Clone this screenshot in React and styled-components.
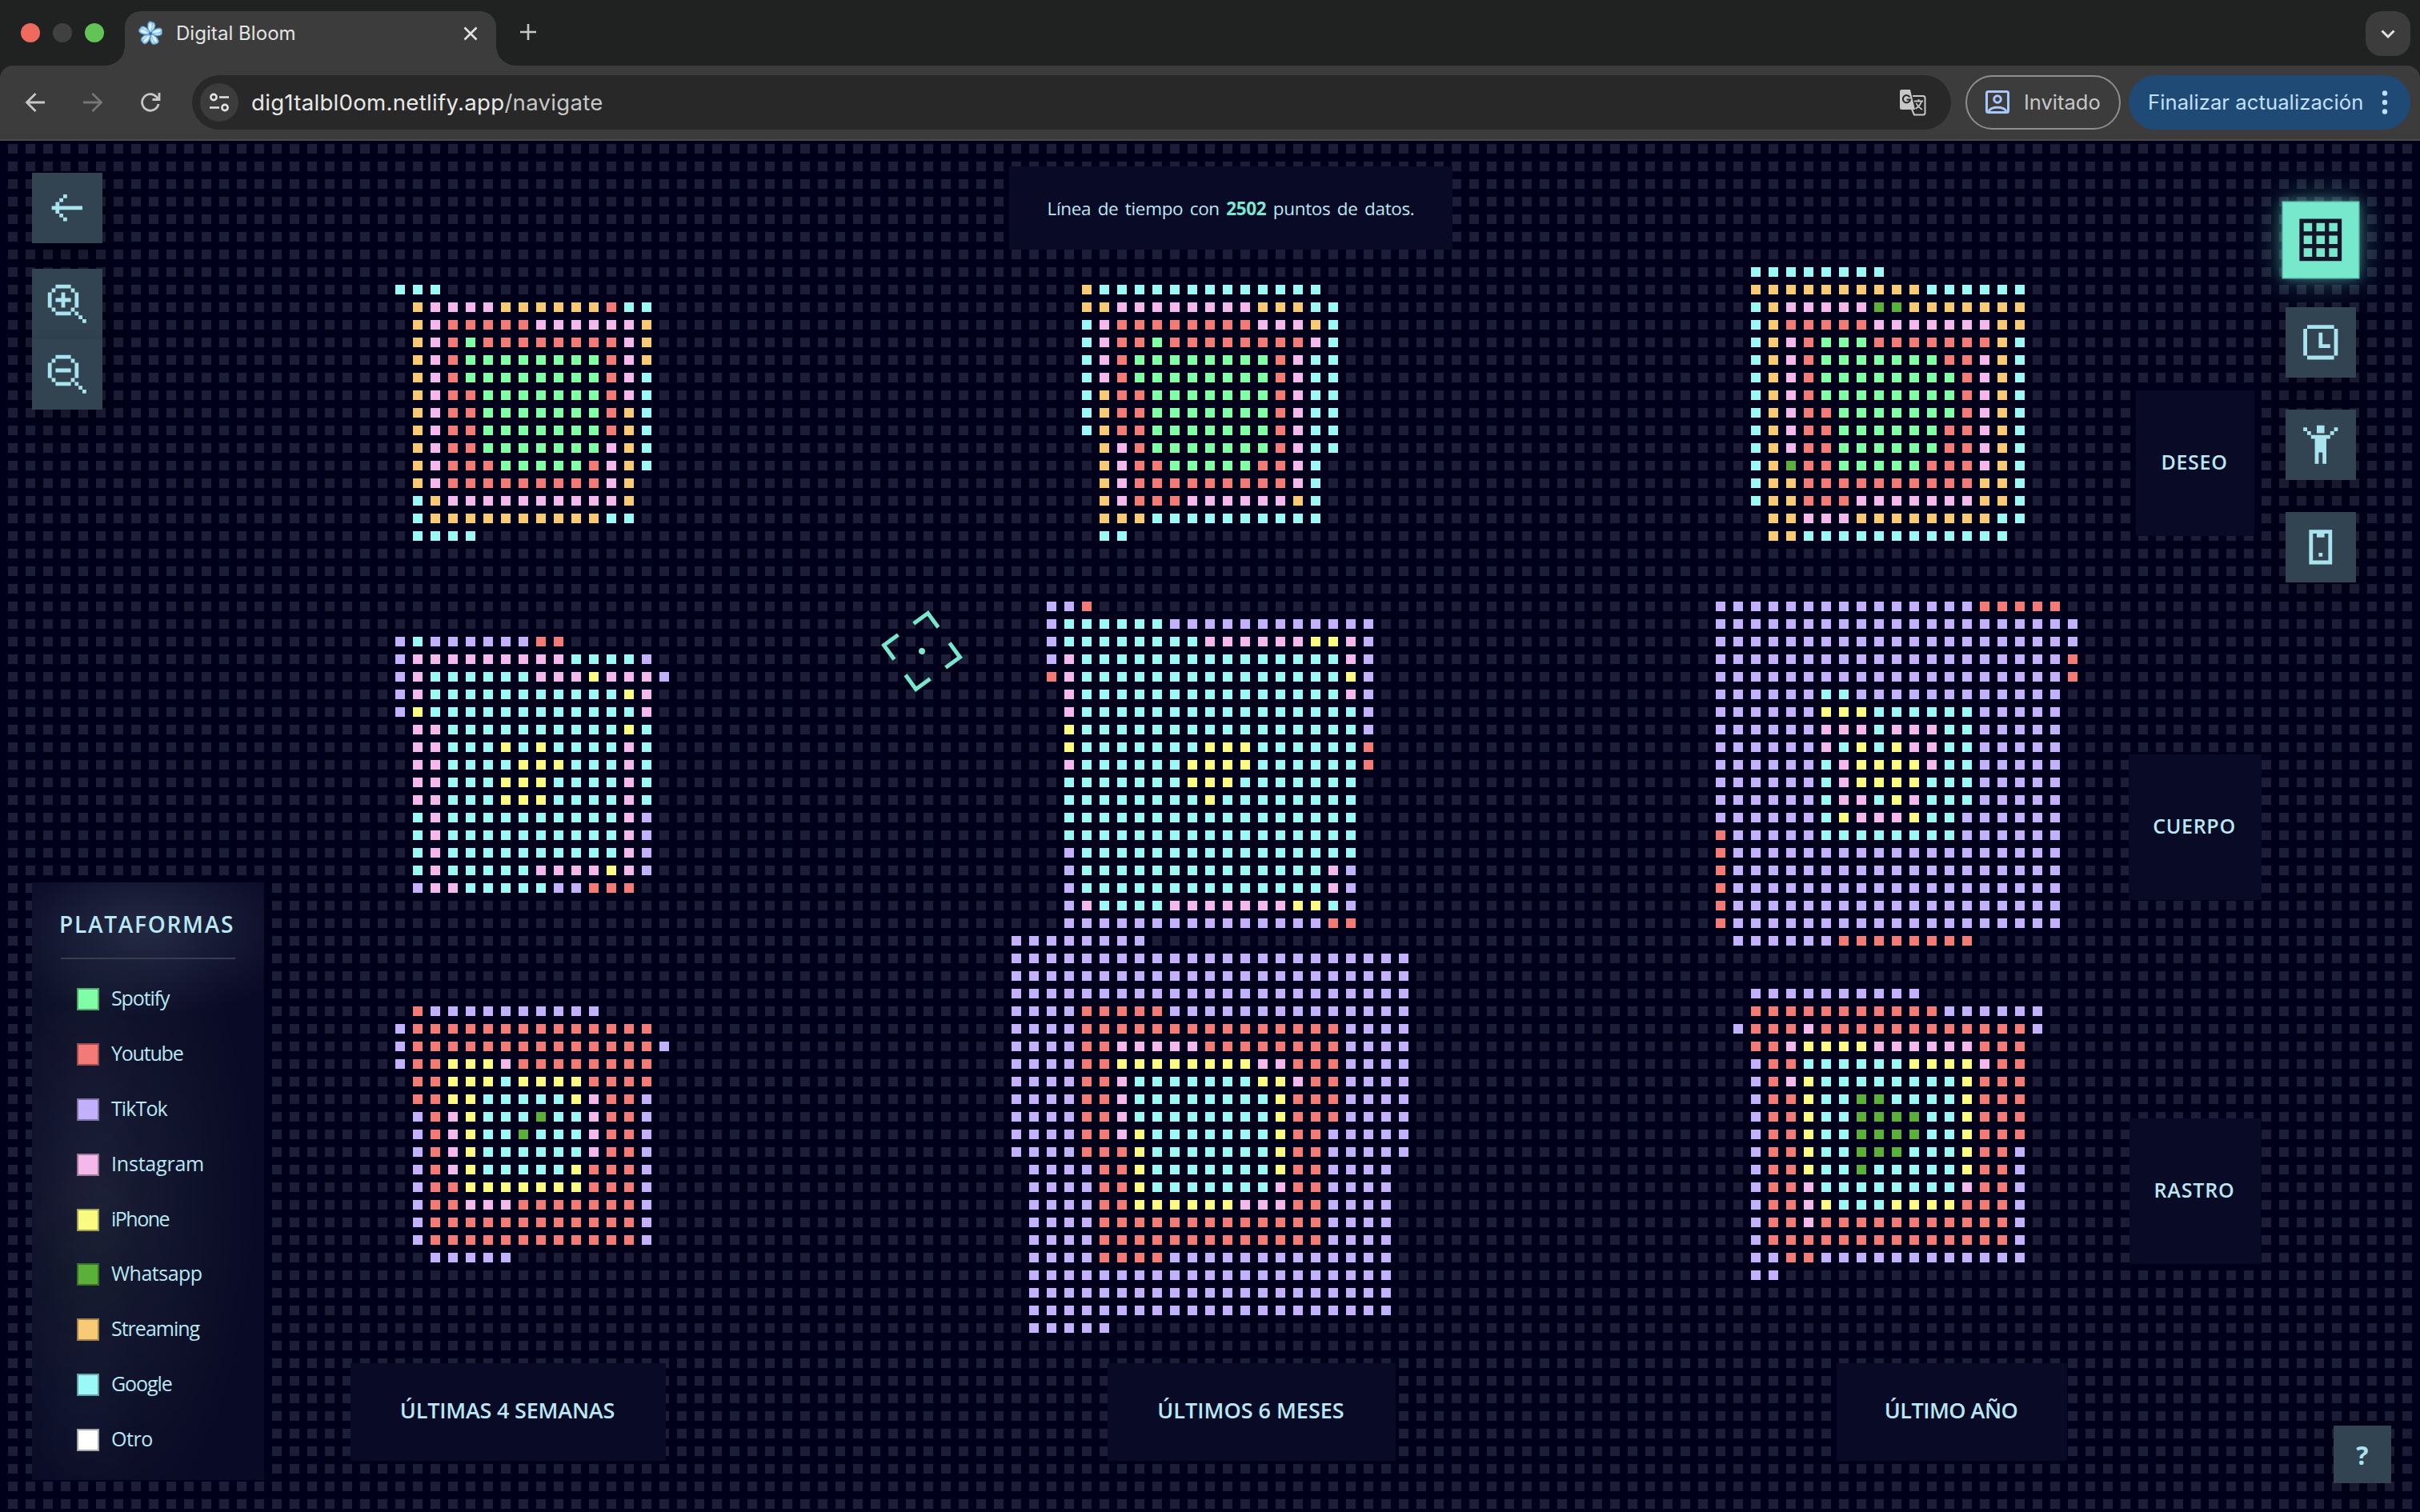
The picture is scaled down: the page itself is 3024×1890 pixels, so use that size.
import React from 'react';
import styled, { createGlobalStyle } from 'styled-components';

const CHROME_FONT = `Inter, 'Liberation Sans', sans-serif`;
const PIXEL_FONT = `'Open Sans', 'Liberation Sans', sans-serif`;

const GlobalStyle = createGlobalStyle`
  * { box-sizing: border-box; }
  body { margin: 0; background: #00001a; overflow: hidden; }
`;

const Window = styled.div`
  display: flex;
  flex-direction: column;
  width: 3024px;
  height: 1890px;
  overflow: hidden;
  background: #202221;
  font-family: ${CHROME_FONT};
`;

/* ---------- browser chrome ---------- */

const TabStrip = styled.div`
  display: flex;
  align-items: flex-end;
  height: 82px;
  padding: 0 12px 0 26px;
`;

const Lights = styled.div`
  display: flex;
  gap: 16px;
  margin-bottom: 29px;
`;

const Light = styled.span`
  width: 24px;
  height: 24px;
  border-radius: 50%;
  background: ${(p) => p.$color};
`;

const Tab = styled.div`
  position: relative;
  display: flex;
  align-items: center;
  width: 464px;
  height: 68px;
  margin-left: 26px;
  padding: 0 20px 12px 16px;
  border-radius: 20px 20px 0 0;
  background: #3c3c3c;
  &::before,
  &::after {
    content: '';
    position: absolute;
    bottom: 0;
    width: 24px;
    height: 24px;
  }
  &::before {
    left: -24px;
    background: radial-gradient(circle at 0 0, transparent 23.5px, #3c3c3c 24px);
  }
  &::after {
    right: -24px;
    background: radial-gradient(circle at 100% 0, transparent 23.5px, #3c3c3c 24px);
  }
`;

const TabTitle = styled.span`
  flex: 1;
  margin-left: 16px;
  color: #e3e3e3;
  font-size: 24px;
  line-height: 30px;
  letter-spacing: 0.05px;
`;

const NewTab = styled.div`
  display: flex;
  margin: 0 0 31px 29px;
`;

const TabSearch = styled.div`
  display: flex;
  align-items: center;
  justify-content: center;
  width: 56px;
  height: 56px;
  margin: 0 0 12px auto;
  border-radius: 20px;
  background: #3c3c3c;
`;

const Toolbar = styled.div`
  display: flex;
  align-items: center;
  height: 94px;
  padding: 0 12px 0 28px;
  border-bottom: 2px solid #4a4a4a;
  border-radius: 16px 16px 0 0;
  background: #3c3c3c;
`;

const NavIcons = styled.div`
  display: flex;
  gap: 40px;
  width: 212px;
`;

const UrlBar = styled.div`
  display: flex;
  align-items: center;
  width: 2198px;
  height: 68px;
  padding: 0 30px 0 10px;
  border-radius: 34px;
  background: #282828;
`;

const SiteInfo = styled.span`
  display: flex;
  align-items: center;
  justify-content: center;
  width: 48px;
  height: 48px;
  border-radius: 50%;
  background: #3c3c3c;
`;

const Url = styled.span`
  flex: 1;
  margin-left: 16px;
  color: #e8e8e8;
  font-size: 27.6px;
  line-height: 34px;
  letter-spacing: 0.28px;
`;

const UrlPath = styled.span`
  color: #c7c7c7;
`;

const GuestPill = styled.div`
  display: flex;
  align-items: center;
  width: 194px;
  height: 68px;
  margin-left: 18px;
  padding-left: 22px;
  gap: 17px;
  border: 2px solid #8e8e8e;
  border-radius: 34px;
  color: #c7c7c7;
  font-size: 25.5px;
  line-height: 34px;
  white-space: nowrap;
`;

const UpdatePill = styled.div`
  display: flex;
  align-items: center;
  justify-content: space-between;
  width: 352px;
  height: 68px;
  margin-left: 10px;
  padding: 0 28px 0 24px;
  border-radius: 34px;
  background: #1f4a76;
  color: #c2e0ff;
  font-size: 25.6px;
  line-height: 34px;
  letter-spacing: 0.08px;
  white-space: nowrap;
`;

/* ---------- page ---------- */

const Stage = styled.main`
  display: grid;
  grid-template: 1714px / 3024px;
  font-family: ${PIXEL_FONT};
  background-color: #00001a;
  color: #b9e8f5;
`;

const DotField = styled.svg`
  grid-area: 1 / 1;
  display: block;
  width: 3024px;
  height: 1714px;
`;

const Layer = styled.div`
  grid-area: 1 / 1;
  display: flex;
  min-width: 0;
  min-height: 0;
  pointer-events: none;
`;

const LeftRail = styled(Layer)`
  flex-direction: column;
  align-items: flex-start;
  justify-content: space-between;
  padding: 40px;
`;

const ButtonStack = styled.div`
  display: flex;
  flex-direction: column;
  gap: ${(p) => p.$gap}px;
`;

const IconButton = styled.div`
  display: flex;
  align-items: center;
  justify-content: center;
  width: 88px;
  height: 88px;
  background: ${(p) => (p.$active ? '#78e8cc' : '#324452')};
  color: ${(p) => (p.$active ? '#14142b' : '#a9e4ee')};
  box-shadow: ${(p) =>
    p.$active
      ? '0 0 40px rgba(120, 232, 204, 0.36), 0 0 12px rgba(120, 232, 204, 0.4), inset 0 0 0 1px rgba(60, 160, 150, 0.7)'
      : '0 8px 32px rgba(0, 0, 0, 0.3)'};
  transform: ${(p) => (p.$active ? 'scale(1.1)' : 'none')};
`;

const Panel = styled.div`
  background: #090a25;
`;

const Legend = styled(Panel)`
  width: 290px;
  height: 747px;
  padding: 30px 36px 0;
  overflow: hidden;
  background: radial-gradient(ellipse 200px 110px at 145px 58px, rgba(110, 125, 150, 0.26), transparent),
    radial-gradient(ellipse 190px 420px at 90px 400px, rgba(70, 85, 95, 0.26), transparent), #090a25;
`;

const LegendTitle = styled.h2`
  margin: 0;
  height: 66px;
  padding-top: 4px;
  border-bottom: 2px solid #373b4f;
  font-size: 28px;
  font-weight: 600;
  line-height: 36px;
  letter-spacing: 1.75px;
  text-indent: -2px;
  white-space: nowrap;
`;

const LegendList = styled.ul`
  display: flex;
  flex-direction: column;
  gap: 40.9px;
  margin: 0;
  padding: 36px 0 0 20px;
  list-style: none;
`;

const LegendItem = styled.li`
  display: flex;
  align-items: center;
  gap: 15px;
  height: 28px;
  font-size: 25px;
  line-height: 24px;
  letter-spacing: ${(p) => p.$track}px;
  white-space: nowrap;
`;

const LegendName = styled.span`
  padding-bottom: 4px;
`;

const Swatch = styled.span`
  width: 28px;
  height: 28px;
  border: 2px solid rgba(0, 0, 0, 0.35);
  background: ${(p) => p.$color};
  box-shadow: 0 0 80px -4px ${(p) => p.$color}70;
`;

const TopLayer = styled(Layer)`
  align-items: flex-start;
  padding: 32px 0 0 1261px;
`;

const InfoPanel = styled(Panel)`
  display: flex;
  align-items: center;
  justify-content: center;
  width: 554px;
  height: 104px;
  font-size: 22.5px;
  letter-spacing: -0.35px;
  word-spacing: 3px;
  white-space: pre;
`;

const Count = styled.b`
  color: #7be8cf;
  font-weight: 700;
`;

const RightRail = styled(Layer)`
  flex-direction: column;
  justify-content: space-between;
  align-items: flex-end;
  padding: 80px 36px 36px;
`;

const ViewButtons = styled(ButtonStack)`
  margin-right: 44px;
`;

const HelpButton = styled(IconButton)`
  width: 72px;
  height: 72px;
  font-size: 32px;
  font-weight: 700;
`;

const CategoryAxis = styled(Layer)`
  flex-direction: column;
  align-items: center;
  justify-self: end;
  width: 562px;
  padding-top: 312px;
  gap: 273px;
`;

const PeriodAxis = styled(Layer)`
  align-items: flex-end;
  padding: 0 0 64px 438px;
`;

const AxisLabel = styled(Panel)`
  display: flex;
  align-items: center;
  justify-content: center;
  flex: none;
  width: ${(p) => p.$w}px;
  height: ${(p) => p.$h}px;
  margin-left: ${(p) => p.$offset || 0}px;
  padding: 0 2px 5px 0;
  font-size: ${(p) => p.$size || 27}px;
  font-weight: 600;
  letter-spacing: ${(p) => p.$track || 0}px;
  white-space: nowrap;
`;

/* ---------- data ---------- */

const PLATFORMS = [
  { id: 'g', name: 'Spotify', color: '#80ffa6', track: -1.1 },
  { id: 'r', name: 'Youtube', color: '#f27b77', track: -1.2 },
  { id: 't', name: 'TikTok', color: '#c3b1fc', track: -0.9 },
  { id: 'i', name: 'Instagram', color: '#f5b8ec', track: -0.2 },
  { id: 'y', name: 'iPhone', color: '#fbfb84', track: -1.5 },
  { id: 'w', name: 'Whatsapp', color: '#5bb03b', track: -0.5 },
  { id: 's', name: 'Streaming', color: '#f8ca76', track: -1 },
  { id: 'c', name: 'Google', color: '#9cf7f7', track: -1.1 },
  { id: 'o', name: 'Otro', color: '#ffffff', track: -0.4 },
];
const COLOR = Object.fromEntries(PLATFORMS.map((p) => [p.id, p.color]));

/* Each row is a run-length string: a platform id and how many squares follow. */
const CLUSTERS = [
  {
    col: 22, row: 8,
    rows: ['c3', '.si4s6rc2', '.sir5i6s', '.sirgr8is', '.sirg8ris', '.sirg8ric', '.sir2g7ric', '.sir2g7rsc',
      '.sir2g7rsc', '.sir2g7isc', '.sir3g5risc', '.sir9is', '.csi10s', '.cs10c2', '.c4'],
  },
  {
    col: 61, row: 8,
    rows: ['sc13', 's2i8s3c2', 'cir8i3sc', 'cir2gr8ic', 'cirg8ric2', 'cirg8ric2', 'csr2g7ric2', 'csr2g7ric2',
      'csr2g7ric2', '.sirg7ric2', '.sir2g5r2ic', '.sir9ic', '.sir3i6sc', '.s3c10', '.c2'],
  },
  {
    col: 99, row: 7,
    rows: ['c8', 's10c6', 'csi5w2s7', 'csr5i7s2', 'csirg3r7sc', 'csirg7r2isc', 'csirg8risc', 'csirg8risc',
      'csir2g7risc', 'csir2g6r2isc', 'csir2g6r2isc', 'cswr2g5r3isc', 'cs2r10s2c', 'cs2r3i7s2c', '.s2i3s8c2', '.s2c12'],
  },
  {
    col: 22, row: 28,
    rows: ['tct6r2', 'ti9c4t', 'tic6i3yi3t', 'tic11yi', 'tyc12i', '.i2c10yc', '.i2c3ycyc4ic', '.i2c4y3c3ic',
      '.i2c3y3c4ic', '.i2c3y3c4ic', '.cic10it', '.cic10it', '.cic10it', '.cic5i4yit', '.ti2c5t2r3'],
  },
  {
    col: 59, row: 26,
    rows: ['t2r', 'tc6t12', 'tc8i6y2it', 'tic15it', 'ric15yt', '.ic15it', '.ic16t', '.yc16t', '.yc7y3c6r',
      '.ic6y4c6r', '.c7y3c7', '.c8yc8', '.c17', '.c17', '.tc16', '.tc14it', '.tc14it', '.tic4i7y2ct', '.t15r2'],
  },
  {
    col: 97, row: 26,
    rows: ['t15r5', 't21', 't21', 't20r', 't20r', 't6c2t12', 't6y3c6t5', 't6i3ci3c2t5', 't6icycyi2c2t5', 't6ciy4ic2t5',
      't6ciy4c3t5', 't6ci2cyic3t5', 't6cyi3yc2t6', 'rt5c8t6', 'rt19', 'rt19', 'rt19', 'rt19', 'rt19', '.t6r8'],
  },
  {
    col: 22, row: 49,
    rows: ['.rt10', 'tr14', 'tr14t', 'tr2y3ir8', '.r2y3cy4r4', '.r2y2c5yir2t', '.triyc3wc2ir2t', '.triyc2wc3ir2t',
      '.triyc6ir2t', '.triyc5yr3t', '.tr2y7r3t', '.tr2i3r7t', '.tr12t', '.tr12t', '.2t5'],
  },
  {
    col: 57, row: 45,
    rows: ['t8', 't23', 't23', 't23', 't4r5t14', 't4r15t4', 't4r2i5r8t4', 't4r2y8i2r3t4', 't4r2ic7y2ir2t4',
      't4r2ic8yr3t4', 't4r2ic8yr3t4', 't4r2iyc7yr2t5', 't4r3yc7yr2t5', '.t4r2yc7yr2t4', '.t4r2yc7ir2t4',
      '.t4r2y6i3r2t4', '.t4r13t4', '.t4r13t4', '.t4r4t13', '.t21', '.t21', '.t21', '.t5'],
  },
  {
    col: 98, row: 48,
    rows: ['.t10', '.r11t6', 'tr3ir12t', '.r2iy4i6r3', '.tr2c6y4ir2', '.triyc8yr3', '.tr2yc2w2c4yr3', '.tr2yc2w4c2yr3',
      '.tr2yc2w4c2yr3', '.tr2yc2w3c3yr2t', '.tr2yc2wc5yr2t', '.tr2ic8ir2t', '.tr2iyc3y4r3t', '.tr2ir11t', '.tr14t',
      '.t2r2t12', '.t2'],
  },
];

const PITCH = 22;
const SIZE = 12;

function clusterSquares({ col, row, rows }) {
  const out = [];
  rows.forEach((line, r) => {
    let c = 0;
    for (const [, id, count] of line.matchAll(/([a-z.])(\d*)/g)) {
      const n = Number(count || 1);
      if (id !== '.') {
        for (let k = 0; k < n; k += 1) out.push({ x: col + c + k, y: row + r, id });
      }
      c += n;
    }
  });
  return out;
}

const SQUARES = CLUSTERS.flatMap(clusterSquares);

/* ---------- icons ---------- */

const PixelIcon = ({ d }) => (
  <svg width="57.6" height="57.6" viewBox="0 0 24 24" fill="currentColor" fillRule="evenodd">
    <path d={d} />
  </svg>
);

const LENS =
  'M6 2h8v2H6zM4 4h2v2H4zM14 4h2v2h-2zM2 6h2v8H2zM16 6h2v8h-2zM4 14h2v2H4zM14 14h2v2h-2zM6 16h8v2H6zM16 16h2v2h-2zM18 18h2v2h-2zM20 20h2v2h-2z';

const ICONS = {
  back: 'M20 11v2H8v2H6v-2H4v-2h2V9h2v2h12zM10 7H8v2h2V7zM12 5h-2v2h2V5zM10 17H8v-2h2v2zM12 17h-2v2h2v-2z',
  zoomIn: `${LENS}M9 6h2v3h3v2h-3v3H9v-3H6V9h3z`,
  zoomOut: `${LENS}M6 9h8v2H6z`,
  grid: 'M2 2h20v20H2zM4 4v4h4V4zM10 4v4h4V4zM16 4v4h4V4zM4 10v4h4v-4zM10 10v4h4v-4zM16 10v4h4v-4zM4 16v4h4v-4zM10 16v4h4v-4zM16 16v4h4v-4z',
  clock: 'M5 3h14v2H5zM3 5h2v14H3zM19 5h2v14h-2zM5 19h14v2H5zM11 7h2v6h4v2h-6z',
  body: 'M10 2h4v4h-4zM3 3h2v2H3zM5 5h2v2H5zM19 3h2v2h-2zM17 5h2v2h-2zM7 7h10v2h-2v13h-2v-6h-2v6H9V9H7z',
  phone: 'M6 3h12v18H6zM8 5v14h8V5h-2v2h-4V5zM11 15h2v2h-2z',
};

const Stroke = ({ size, box = 24, color = '#c7c7c7', width = 2, children }) => (
  <svg width={size} height={size} viewBox={`0 0 ${box} ${box}`} fill="none" stroke={color} strokeWidth={width}>
    {children}
  </svg>
);

const Flower = () => (
  <svg width="32" height="32" viewBox="0 0 32 32">
    {[18, 90, 162, 234, 306].map((a) => (
      <g key={a} transform={`rotate(${a - 10} 16 16)`}>
        <path d="M16 16C10 11 9.500 1.500 13.500 1C15 0.500 16 1.500 16.500 1.500C22 0.500 22 11 16 16Z" fill="#8cc8ea" stroke="#4a86b0" strokeWidth=".8" />
        <path d="M14.500 13C12 8 12.500 3 14.500 3C16.500 3 16.500 8 15.500 13Z" fill="#e4f2ff" />
        <path d="M17 11C17 8 17.500 4 18.500 4C19.800 5 19 8.500 17 11Z" fill="#cfe6ff" />
      </g>
    ))}
    <circle cx="16" cy="16" r="2" fill="#4d61c8" />
  </svg>
);

const Reticle = () => (
  <g transform="translate(1152 638) rotate(9)" fill="none" stroke="#78e8cc" strokeWidth="5">
    <g transform="rotate(45)">
      <path d="M-34 -12V-34H-12M12 -34H34V-12M34 12V34H12M-12 34H-34V12" />
    </g>
    <circle r="4" fill="#78e8cc" stroke="none" />
  </g>
);

export default function App() {
  return (
    <Window>
      <GlobalStyle />
      <TabStrip>
        <Lights>
          <Light $color="#ee6a5f" />
          <Light $color="#3f403f" />
          <Light $color="#61c454" />
        </Lights>
        <Tab>
          <Flower />
          <TabTitle>Digital Bloom</TabTitle>
          <Stroke size={24} color="#e3e3e3" width={2.6}>
            <path d="M4.500 4.500L19.500 19.500M19.500 4.500L4.500 19.500" />
          </Stroke>
        </Tab>
        <NewTab>
          <Stroke size={22} box={22} width={2.6}>
            <path d="M11 1V21M1 11H21" />
          </Stroke>
        </NewTab>
        <TabSearch>
          <Stroke size={24} color="#e3e3e3" width={3}>
            <path d="M4.500 8.500L12 16L19.500 8.500" />
          </Stroke>
        </TabSearch>
      </TabStrip>

      <Toolbar>
        <NavIcons>
          <Stroke size={32} box={32} width={2.8}>
            <path d="M28 16H6M16.500 5L5.500 16L16.500 27" />
          </Stroke>
          <Stroke size={32} box={32} width={2.8} color="#777777">
            <path d="M4 16H26M15.500 5L26.500 16L15.500 27" />
          </Stroke>
          <Stroke size={32} box={32} width={2.8}>
            <path d="M26 18A10.300 10.300 0 1 1 23.500 9L27 12.500M27 4V12.500H18.500" />
          </Stroke>
        </NavIcons>
        <UrlBar>
          <SiteInfo>
            <Stroke size={28} box={28} color="#e3e3e3" width={2.6}>
              <circle cx="7" cy="7.500" r="3.600" />
              <path d="M14 7.500H26M2 20.500H14" />
              <circle cx="21" cy="20.500" r="3.600" />
            </Stroke>
          </SiteInfo>
          <Url>
            dig1talbl0om.netlify.app<UrlPath>/navigate</UrlPath>
          </Url>
          <svg width="36" height="36" viewBox="0 0 36 36" fill="none">
            <path d="M18 10H31a2.500 2.500 0 0 1 2.500 2.500V31A2.500 2.500 0 0 1 31 33.500H20l-3-7" stroke="#c7c7c7" strokeWidth="2" />
            <path d="M4.500 2H15l6 25H4.500A2.500 2.500 0 0 1 2 24.500V4.500A2.500 2.500 0 0 1 4.500 2Z" fill="#c7c7c7" />
            <path d="M14.500 11.500A4.600 4.600 0 1 0 15 14.500H10.500" stroke="#282828" strokeWidth="2" />
            <path d="M20 16.500H31M25.500 14V16.500M29 16.500C28 21 25 24 21.500 26M22.500 19C24 22.500 27 25 30 27" stroke="#c7c7c7" strokeWidth="1.800" />
          </svg>
        </UrlBar>
        <GuestPill>
          <Stroke size={32} box={32} color="#a8c7fa" width={3}>
            <rect x="2.500" y="2.500" width="27" height="26" rx="2" />
            <circle cx="16" cy="12" r="4.300" />
            <path d="M5 27C8 20.500 24 20.500 27 27" />
          </Stroke>
          Invitado
        </GuestPill>
        <UpdatePill>
          Finalizar actualización
          <svg width="8" height="32" viewBox="0 0 8 32" fill="currentColor">
            <circle cx="4" cy="4.500" r="3.200" />
            <circle cx="4" cy="16" r="3.200" />
            <circle cx="4" cy="27.500" r="3.200" />
          </svg>
        </UpdatePill>
      </Toolbar>

      <Stage>
        <DotField viewBox="0 0 3024 1714">
          <defs>
            <pattern id="idle" x="10" y="4" width={PITCH} height={PITCH} patternUnits="userSpaceOnUse">
              <rect width={SIZE} height={SIZE} fill="#1c1e38" />
            </pattern>
          </defs>
          <rect x="10" y="4" width="3014" height="1710" fill="url(#idle)" />
          {SQUARES.map(({ x, y, id }) => (
            <rect key={`${x}-${y}`} x={10 + x * PITCH} y={4 + y * PITCH} width={SIZE} height={SIZE} fill={COLOR[id]} />
          ))}
          <Reticle />
        </DotField>

        <CategoryAxis>
          <AxisLabel $w={148} $h={182} $size={25} $track={0.7}>DESEO</AxisLabel>
          <AxisLabel $w={166} $h={182} $size={25} $track={0.7}>CUERPO</AxisLabel>
          <AxisLabel $w={164} $h={182} $size={25} $track={0.8}>RASTRO</AxisLabel>
        </CategoryAxis>

        <PeriodAxis>
          <AxisLabel $w={394} $h={122} $track={-0.2}>ÚLTIMAS 4 SEMANAS</AxisLabel>
          <AxisLabel $w={360} $h={122} $offset={552}>ÚLTIMOS 6 MESES</AxisLabel>
          <AxisLabel $w={288} $h={122} $offset={551} $track={-0.5}>ÚLTIMO AÑO</AxisLabel>
        </PeriodAxis>

        <TopLayer>
          <InfoPanel>
            Línea de tiempo con <Count>2502</Count> puntos de datos.
          </InfoPanel>
        </TopLayer>

        <LeftRail>
          <ButtonStack $gap={32}>
            <IconButton><PixelIcon d={ICONS.back} /></IconButton>
            <ButtonStack $gap={0}>
              <IconButton><PixelIcon d={ICONS.zoomIn} /></IconButton>
              <IconButton><PixelIcon d={ICONS.zoomOut} /></IconButton>
            </ButtonStack>
          </ButtonStack>
          <Legend>
            <LegendTitle>PLATAFORMAS</LegendTitle>
            <LegendList>
              {PLATFORMS.map((p) => (
                <LegendItem key={p.id} $track={p.track}>
                  <Swatch $color={p.color} />
                  <LegendName>{p.name}</LegendName>
                </LegendItem>
              ))}
            </LegendList>
          </Legend>
        </LeftRail>

        <RightRail>
          <ViewButtons $gap={40}>
            <IconButton $active><PixelIcon d={ICONS.grid} /></IconButton>
            <IconButton><PixelIcon d={ICONS.clock} /></IconButton>
            <IconButton><PixelIcon d={ICONS.body} /></IconButton>
            <IconButton><PixelIcon d={ICONS.phone} /></IconButton>
          </ViewButtons>
          <HelpButton>?</HelpButton>
        </RightRail>
      </Stage>
    </Window>
  );
}
